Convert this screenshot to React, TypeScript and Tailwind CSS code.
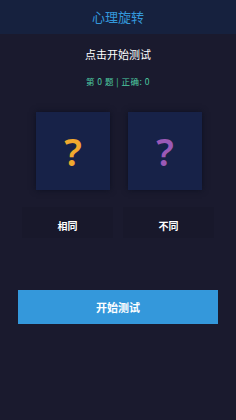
const font = { fontFamily: '"Noto Sans CJK SC", "Noto Sans", sans-serif' };

export default function App() {
  return (
    <div style={font} className="w-[236px] h-[420px] bg-[#1a1a2e] flex flex-col overflow-hidden">
      {/* Header */}
      <div className="h-[34px] bg-[#16213e] flex items-center justify-center shrink-0">
        <span className="text-[13px] text-[#3498db]">心理旋转</span>
      </div>

      {/* Prompt + score */}
      <div className="pt-[12px] text-center text-white text-[11px] leading-[16px]">点击开始测试</div>
      <div className="pt-[13px] text-center text-[#4ecca3] text-[8.5px] leading-[12px] tracking-[0.5px]">第 0 题 | 正确: 0</div>

      {/* Figures */}
      <div className="mt-[25px] flex justify-center gap-[18px] pl-[2px]">
        <div className="w-[74px] h-[78px] bg-[#172248] shadow-[0_0_6px_rgba(10,14,30,0.8)] flex items-center justify-center">
          <span className="font-['Noto_Sans',sans-serif] text-[38px] font-semibold text-[#f0a92e] leading-none">?</span>
        </div>
        <div className="w-[74px] h-[78px] bg-[#172248] shadow-[0_0_6px_rgba(10,14,30,0.8)] flex items-center justify-center">
          <span className="font-['Noto_Sans',sans-serif] text-[38px] font-semibold text-[#9b59b6] leading-none">?</span>
        </div>
      </div>

      {/* Answer buttons */}
      <div className="mt-[17px] flex justify-center gap-[10px] px-[22px]">
        <button className="flex-1 h-[31px] bg-[#18182b] text-white text-[10px] font-bold flex items-center justify-center pt-[6px]">相同</button>
        <button className="flex-1 h-[31px] bg-[#18182b] text-white text-[10px] font-bold flex items-center justify-center pt-[6px]">不同</button>
      </div>

      {/* Start */}
      <div className="mt-[52px] px-[18px]">
        <button className="w-full h-[34px] bg-[#3498db] text-white text-[11px] font-bold flex items-center justify-center">开始测试</button>
      </div>
    </div>
  );
}
